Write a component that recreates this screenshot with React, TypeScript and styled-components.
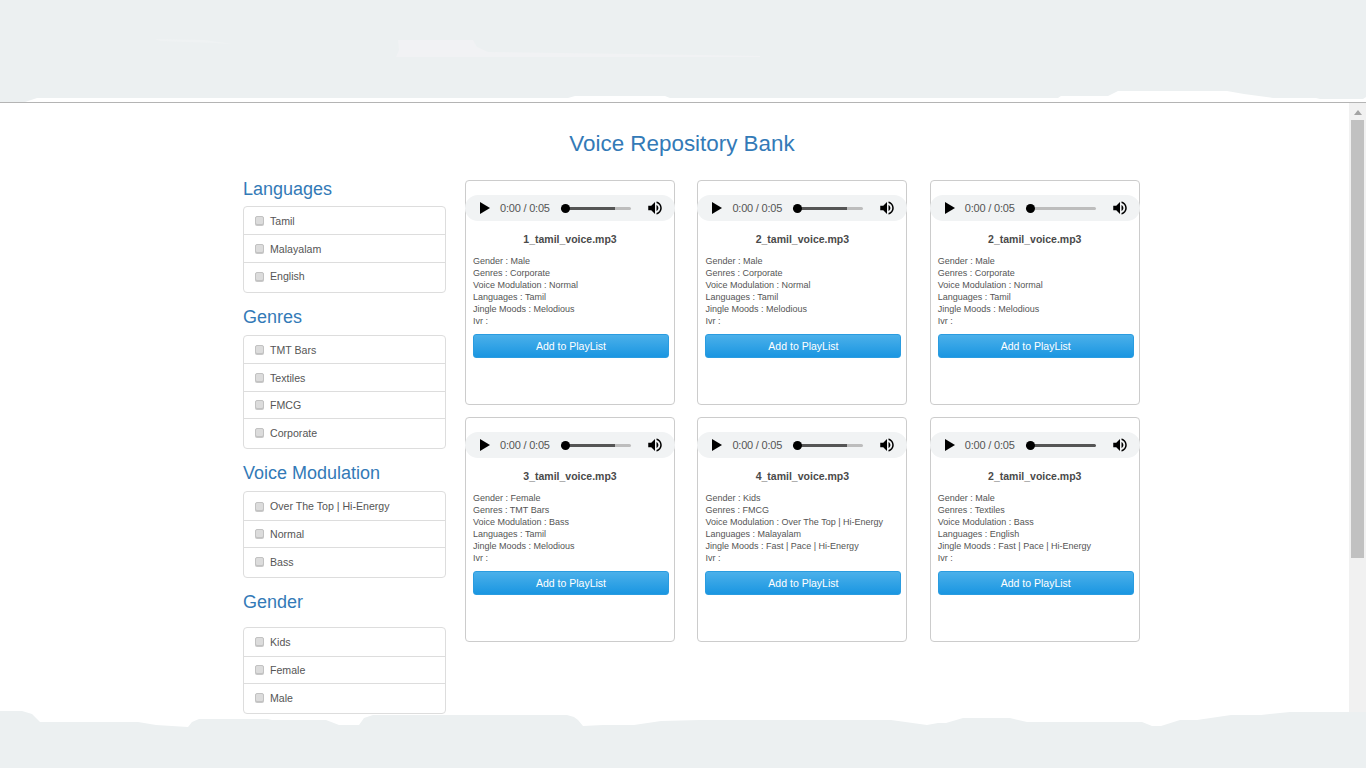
import React from "react";
import styled, { createGlobalStyle } from "styled-components";

const GlobalStyle = createGlobalStyle`
  html, body {
    margin: 0;
    padding: 0;
    background: #fff;
    font-family: "Liberation Sans", Arial, sans-serif;
  }
  * {
    box-sizing: border-box;
  }
`;

const Shell = styled.div`
  position: relative;
  display: flex;
  flex-direction: column;
  width: 100%;
  height: 100vh;
  overflow: hidden;
`;

const TopBand = styled.svg`
  display: block;
  flex: none;
  width: 100%;
  height: 102px;
`;

const Body = styled.div`
  display: flex;
  flex: 1;
  min-height: 0;
  border-top: 1px solid #b4b4b4;
`;

const Page = styled.main`
  flex: 1;
  padding: 28px 0 0 243px;
`;

const Title = styled.h1`
  width: 878px;
  margin: 0 0 22px;
  font-size: 22.4px;
  font-weight: 400;
  line-height: 26px;
  text-align: center;
  color: #337ab7;
`;

const Columns = styled.div`
  display: flex;
  gap: 19px;
`;

const Sidebar = styled.aside`
  flex: none;
  width: 203px;
`;

const FilterGroup = styled.section`
  margin-bottom: 14px;
`;

const FilterTitle = styled.h2<{ $gap?: number }>`
  margin: 0 0 ${(p) => p.$gap ?? 8}px;
  font-size: 18px;
  font-weight: 400;
  line-height: 20px;
  color: #337ab7;
`;

const FilterList = styled.div`
  border: 1px solid #ddd;
  border-radius: 4px;
`;

const FilterRow = styled.label`
  display: flex;
  align-items: center;
  gap: 6px;
  height: 27.4px;
  padding-left: 11px;
  font-size: 10.6px;
  color: #555;
  border-top: 1px solid #ddd;

  &:first-child {
    border-top: 0;
  }
  &:last-child {
    height: 30.2px;
    padding-bottom: 2px;
  }
`;

const Check = styled.input`
  appearance: none;
  flex: none;
  width: 9px;
  height: 9px;
  margin: 0;
  background: #dcdcdc;
  border: 1px solid #c2c2c2;
  border-radius: 2px;
  box-shadow: 0 1px 0 #c8c8c8;
`;

const CardGrid = styled.div`
  display: grid;
  grid-template-columns: repeat(3, 210px);
  column-gap: 22.4px;
  row-gap: 12px;
  align-content: start;
  padding-top: 1px;
`;

const Card = styled.article`
  height: 225px;
  padding-top: 14px;
  background: #fff;
  border: 1px solid #ccc;
  border-radius: 4px;
`;

const Player = styled.div`
  display: flex;
  align-items: center;
  height: 26px;
  margin: 0 -1px;
  padding-left: 15px;
  background: #f1f3f4;
  border-radius: 13px;
`;

const PlayIcon = styled.svg`
  flex: none;
  width: 10px;
  height: 12px;
  fill: #000;
`;

const Time = styled.span`
  flex: none;
  width: 61px;
  margin-left: 10px;
  font-size: 11px;
  letter-spacing: -0.2px;
  color: #555;
`;

const Track = styled.div<{ $fill: number }>`
  position: relative;
  flex: none;
  width: 70px;
  height: 3px;
  border-radius: 2px;
  background: linear-gradient(
    to right,
    #555 ${(p) => p.$fill}%,
    #bdbdbd ${(p) => p.$fill}%
  );
`;

const Knob = styled.span`
  position: absolute;
  left: 0;
  top: -3px;
  width: 9px;
  height: 9px;
  border-radius: 50%;
  background: #000;
`;

const VolumeIcon = styled.svg`
  flex: none;
  width: 18px;
  height: 18px;
  margin-left: 15px;
  fill: #000;
`;

const FileName = styled.h3`
  margin: 11px 0 9px;
  font-size: 10.5px;
  font-weight: 700;
  line-height: 14px;
  text-align: center;
  color: #4a4a4a;
`;

const CardBody = styled.div`
  padding: 0 5px 0 7px;
`;

const Detail = styled.div`
  font-size: 9px;
  line-height: 12px;
  color: #555;
`;

const AddButton = styled.button`
  display: block;
  width: 100%;
  height: 24px;
  margin-top: 7px;
  padding: 0;
  font-family: inherit;
  font-size: 10.5px;
  color: #fff;
  background: linear-gradient(to bottom, #4bb0ea, #1a96e1);
  border: 1px solid #2a9ce0;
  border-radius: 3px;
`;

const Scrollbar = styled.div`
  display: flex;
  flex: none;
  flex-direction: column;
  align-items: center;
  width: 17px;
  background: #f1f1f1;
`;

const ScrollArrow = styled.span`
  width: 0;
  height: 0;
  margin: 7px 0 5px;
  border-left: 4px solid transparent;
  border-right: 4px solid transparent;
  border-bottom: 5px solid #a3a3a3;
`;

const ScrollThumb = styled.div`
  width: 13px;
  height: 438px;
  background: #c1c1c1;
`;

const BottomBand = styled.svg`
  position: absolute;
  left: 0;
  bottom: 0;
  display: block;
  width: 100%;
  height: 57px;
`;

const filters: { title: string; gap: number; items: string[] }[] = [
  { title: "Languages", gap: 7, items: ["Tamil", "Malayalam", "English"] },
  { title: "Genres", gap: 8, items: ["TMT Bars", "Textiles", "FMCG", "Corporate"] },
  { title: "Voice Modulation", gap: 8, items: ["Over The Top | Hi-Energy", "Normal", "Bass"] },
  { title: "Gender", gap: 15, items: ["Kids", "Female", "Male"] },
];

interface Voice {
  file: string;
  fill: number;
  gender: string;
  genre: string;
  modulation: string;
  language: string;
  mood: string;
}

const voices: Voice[] = [
  { file: "1_tamil_voice.mp3", fill: 77, gender: "Male", genre: "Corporate", modulation: "Normal", language: "Tamil", mood: "Melodious" },
  { file: "2_tamil_voice.mp3", fill: 77, gender: "Male", genre: "Corporate", modulation: "Normal", language: "Tamil", mood: "Melodious" },
  { file: "2_tamil_voice.mp3", fill: 0, gender: "Male", genre: "Corporate", modulation: "Normal", language: "Tamil", mood: "Melodious" },
  { file: "3_tamil_voice.mp3", fill: 77, gender: "Female", genre: "TMT Bars", modulation: "Bass", language: "Tamil", mood: "Melodious" },
  { file: "4_tamil_voice.mp3", fill: 77, gender: "Kids", genre: "FMCG", modulation: "Over The Top | Hi-Energy", language: "Malayalam", mood: "Fast | Pace | Hi-Energy" },
  { file: "2_tamil_voice.mp3", fill: 100, gender: "Male", genre: "Textiles", modulation: "Bass", language: "English", mood: "Fast | Pace | Hi-Energy" },
];

const App: React.FC = () => {
  return (
    <Shell>
      <GlobalStyle />
      <TopBand viewBox="0 0 1366 102" preserveAspectRatio="none">
        <path
          fill="#ecf0f1"
          d="M0 0H1366V97L1363 99H1320L1316 98H1273L1244 94L1227 91H1118L1108 96H1061L1058 98H670L665 96H575L568 98H37L25 102H0Z"
        />
        <path
          fill="#f1f2f4"
          d="M398 40H473L477 47L488 52L700 55L760 56V57H396L399 50Z"
        />
        <path fill="#eff2f3" d="M155 39L205 40L232 44L215 43L160 41Z" />
      </TopBand>
      <Body>
        <Page>
          <Title>Voice Repository Bank</Title>
          <Columns>
            <Sidebar>
              {filters.map((group) => (
                <FilterGroup key={group.title}>
                  <FilterTitle $gap={group.gap}>{group.title}</FilterTitle>
                  <FilterList>
                    {group.items.map((item) => (
                      <FilterRow key={item}>
                        <Check type="checkbox" />
                        {item}
                      </FilterRow>
                    ))}
                  </FilterList>
                </FilterGroup>
              ))}
            </Sidebar>
            <CardGrid>
              {voices.map((voice, index) => (
                <Card key={index}>
                  <Player>
                    <PlayIcon viewBox="0 0 10 12">
                      <path d="M0 0L10 6L0 12Z" />
                    </PlayIcon>
                    <Time>0:00 / 0:05</Time>
                    <Track $fill={voice.fill}>
                      <Knob />
                    </Track>
                    <VolumeIcon viewBox="0 0 24 24">
                      <path d="M3 9v6h4l5 5V4L7 9H3zm13.5 3c0-1.77-1.02-3.29-2.5-4.03v8.05c1.48-.73 2.5-2.25 2.5-4.02zM14 3.23v2.06c2.89.86 5 3.54 5 6.71s-2.11 5.85-5 6.71v2.06c4.01-.91 7-4.49 7-8.77s-2.99-7.86-7-8.77z" />
                    </VolumeIcon>
                  </Player>
                  <FileName>{voice.file}</FileName>
                  <CardBody>
                    <Detail>Gender : {voice.gender}</Detail>
                    <Detail>Genres : {voice.genre}</Detail>
                    <Detail>Voice Modulation : {voice.modulation}</Detail>
                    <Detail>Languages : {voice.language}</Detail>
                    <Detail>Jingle Moods : {voice.mood}</Detail>
                    <Detail>Ivr :</Detail>
                    <AddButton type="button">Add to PlayList</AddButton>
                  </CardBody>
                </Card>
              ))}
            </CardGrid>
          </Columns>
        </Page>
        <Scrollbar>
          <ScrollArrow />
          <ScrollThumb />
        </Scrollbar>
      </Body>
      <BottomBand viewBox="0 711 1366 57" preserveAspectRatio="none">
        <path
          fill="#ecf0f1"
          d="M0 711H22L32 714L40 722H94L96 722H138L156 725L188 727L192 722L199 719H268L272 720H326L339 725H359L364 718L373 715H567L574 717L578 720L583 726L603 725H634L661 721L700 720H891L927 725L938 723H946L963 718H1010L1027 722H1142L1152 726H1161L1180 720H1197L1231 715H1261L1290 712H1366V768H0Z"
        />
      </BottomBand>
    </Shell>
  );
};

export default App;
